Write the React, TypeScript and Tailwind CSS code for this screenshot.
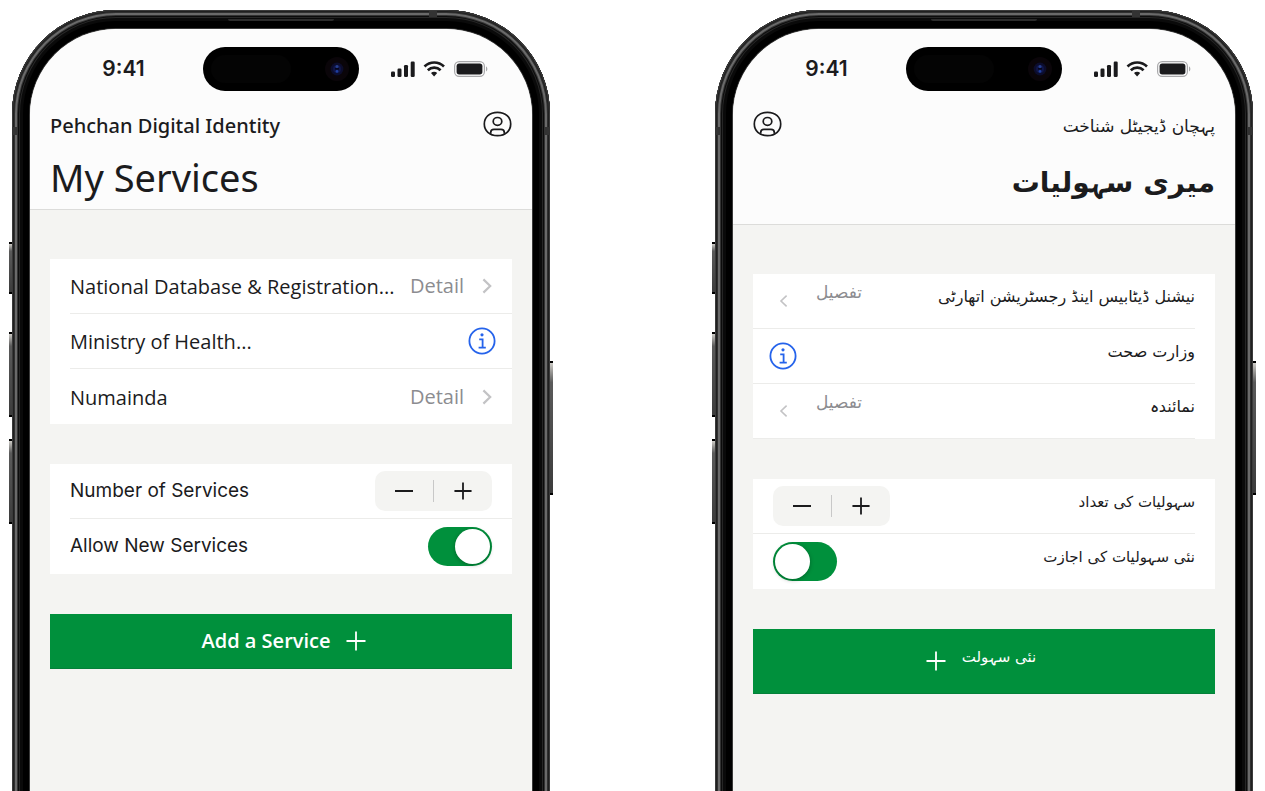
import type { ReactNode } from 'react'

type Locale = {
  id: string
  dir: 'ltr' | 'rtl'
  lang: string
  app: string
  title: string
  detail: string
  services: { name: string; info?: boolean }[]
  count: string
  allow: string
  add: string
}

const english: Locale = {
  id: 'en',
  dir: 'ltr',
  lang: 'en',
  app: 'Pehchan Digital Identity',
  title: 'My Services',
  detail: 'Detail',
  services: [
    { name: 'National Database & Registration...' },
    { name: 'Ministry of Health...', info: true },
    { name: 'Numainda' },
  ],
  count: 'Number of Services',
  allow: 'Allow New Services',
  add: 'Add a Service',
}

const urdu: Locale = {
  id: 'ur',
  dir: 'rtl',
  lang: 'ur',
  app: 'پہچان ڈیجیٹل شناخت',
  title: 'میری سہولیات',
  detail: 'تفصیل',
  services: [
    { name: 'نیشنل ڈیٹابیس اینڈ رجسٹریشن اتھارٹی' },
    { name: 'وزارت صحت', info: true },
    { name: 'نمائندہ' },
  ],
  count: 'سہولیات کی تعداد',
  allow: 'نئی سہولیات کی اجازت',
  add: 'نئی سہولت',
}

function SignalIcons() {
  return (
    <svg width="98" height="18" viewBox="0 0 98 18" aria-hidden="true">
      <g fill="#1b1b1d">
        <rect x="1" y="11.5" width="4" height="5.5" rx="1.2" />
        <rect x="7.5" y="8.5" width="4" height="8.5" rx="1.2" />
        <rect x="14" y="5" width="4" height="12" rx="1.2" />
        <rect x="20.7" y="1.5" width="4" height="15.5" rx="1.2" />
        <path d="M41 13 a4.2 4.2 0 0 1 6.2 0 L44.1 16.6 Z" />
      </g>
      <g fill="none" stroke="#1b1b1d" strokeWidth="2.7">
        <path d="M34.5 6.4 C40 1.2 48.5 1.2 54 6.4" />
        <path d="M37.8 10.2 C41.5 6.8 47 6.8 50.6 10.2" />
      </g>
      <rect x="64.6" y="1.6" width="29.8" height="14.8" rx="4.6" fill="none" stroke="#a9a9ab" strokeWidth="1.2" />
      <rect x="66.6" y="3.6" width="25.8" height="10.8" rx="2.6" fill="#1b1b1d" />
      <path d="M96 6.6 c1.8 .6 1.8 4.2 0 4.8 z" fill="#a9a9ab" />
    </svg>
  )
}

function ProfileIcon() {
  return (
    <svg width="29" height="26" viewBox="0 0 29 26" fill="none" stroke="#1b1b1d" strokeWidth="1.7" aria-hidden="true">
      <path d="M14.5 1.3 C22.6 1.3 27.7 6.3 27.7 13 S22.6 24.6 14.5 24.6 S1.3 19.7 1.3 13 S6.4 1.3 14.5 1.3 Z" />
      <ellipse cx="14.5" cy="10.4" rx="4.3" ry="3.9" />
      <path d="M7.7 22.8 V21.4 Q7.7 18.3 11 18.3 H18 Q21.3 18.3 21.3 21.4 V22.8" />
    </svg>
  )
}

function InfoIcon() {
  return (
    <svg width="28" height="28" viewBox="0 0 28 28" fill="none" stroke="#2563eb" strokeWidth="1.8" aria-hidden="true">
      <circle cx="14" cy="14" r="12.6" />
      <circle cx="14" cy="7.8" r="1.6" fill="#2563eb" stroke="none" />
      <path d="M11.2 12.4 H14.6 V20.6 M10.6 20.7 H17.8" />
    </svg>
  )
}

function Chevron({ rtl }: { rtl: boolean }) {
  return rtl ? (
    <svg width="9" height="14" viewBox="0 0 9 14" fill="none" stroke="#c3c3c5" strokeWidth="1.6" aria-hidden="true">
      <path d="M7.6 1.6 L2 7 L7.6 12.4" />
    </svg>
  ) : (
    <svg width="10" height="16" viewBox="0 0 10 16" fill="none" stroke="#c3c3c5" strokeWidth="2.2" aria-hidden="true">
      <path d="M1.4 1.4 L8.2 8 L1.4 14.6" />
    </svg>
  )
}

function Plus({ size, width }: { size: number; width: number }) {
  return (
    <svg width={size} height={size} viewBox="0 0 20 20" fill="none" stroke="currentColor" strokeWidth={width} aria-hidden="true">
      <path d="M10 .5 V19.5 M.5 10 H19.5" />
    </svg>
  )
}

function Island() {
  return (
    <div className="flex h-11 items-center justify-between rounded-full bg-black pr-2.5 pl-2">
      <div className="h-7 w-20 rounded-full bg-[#040404]" />
      <svg width="24" height="24" viewBox="0 0 24 24" aria-hidden="true">
        <circle cx="12" cy="12" r="12" fill="#0a0509" />
        <circle cx="12" cy="12" r="6.4" fill="#0c0d2c" />
        <circle cx="12" cy="12" r="4" fill="#10164a" />
        <circle cx="12" cy="9.4" r="1.5" fill="#27408f" />
        <circle cx="12" cy="14.4" r="1.4" fill="#1f3fa0" />
        <rect x="10" y="11" width="4" height="1.6" fill="#06071c" />
      </svg>
    </div>
  )
}

function SideButton({ className }: { className: string }) {
  return (
    <div
      className={`absolute w-1 border-y-2 border-black bg-linear-to-b from-[#cfcdc8] via-[#5a5a5a] via-15% to-[#3c3c3c] ${className}`}
    />
  )
}

function Frame({ children }: { children: ReactNode }) {
  return (
    <div className="relative -mb-8">
      <SideButton className="-left-[3px] top-[232px] h-[52px]" />
      <SideButton className="-left-[3px] top-[322px] h-[85px]" />
      <SideButton className="-left-[3px] top-[429px] h-[85px]" />
      <SideButton className="-right-[3px] top-[351px] h-[134px]" />
      <div className="relative h-full rounded-t-[104px] bg-black p-[18px] pt-[19px] shadow-[inset_0_0_0_1px_#3a3a3a,inset_0_0_0_2px_#202020,inset_0_0_0_3px_#303030,inset_0_0_0_5px_#6a6a6a,inset_0_0_0_6px_#333333,inset_0_0_0_7px_#0c0c0c,inset_0_0_0_8px_#262626,inset_0_0_0_11px_#0a0a0a]">
        <div className="absolute top-[117px] left-0 h-2 w-[6px] bg-[#333333]" />
        <div className="absolute top-[117px] right-0 h-2 w-[6px] bg-[#333333]" />
        <div className="absolute top-px right-[113px] h-[6px] w-2 bg-[#333333]" />
        <div className="absolute inset-x-0 top-[9px] mx-auto h-[2px] w-[106px] rounded-b-sm bg-[#2c2c2c]" />
        <div className="h-full overflow-hidden rounded-t-[86px] bg-[#f4f4f2] shadow-[0_0_0_1px_#3a3a3a]">{children}</div>
      </div>
    </div>
  )
}

function Phone({ t }: { t: Locale }) {
  const rtl = t.dir === 'rtl'
  const rowText = rtl ? "mb-2 font-['DejaVu_Sans'] text-base" : "mt-0.5 font-['Open_Sans'] text-xl"
  const settingText = rtl ? "mb-2 font-['DejaVu_Sans'] text-[15px]" : "font-['Inter'] text-[19px]"

  return (
    <Frame>
      <header className="border-b border-[#dcdcda] bg-[#fcfcfc]">
        <div className="grid grid-cols-[1fr_156px_1fr] items-center pt-[18px]">
          <span className="pl-3.5 text-center font-['Inter'] text-[21px] leading-7 font-semibold">9:41</span>
          <Island />
          <span className="flex justify-center pr-3.5">
            <SignalIcons />
          </span>
        </div>
        <div dir={t.dir} lang={t.lang} className={`px-5 ${rtl ? "h-[133px] font-['DejaVu_Sans']" : "h-[118px] font-['Noto_Sans']"}`}>
          <div className="flex items-start justify-between pt-5">
            <p className={rtl ? 'text-[17px] leading-[30px]' : 'text-xl leading-[30px] font-medium'}>{t.app}</p>
            <button type="button" aria-label="Profile">
              <ProfileIcon />
            </button>
          </div>
          <h1 className={rtl ? 'pt-4 text-[28px] leading-[52px] font-bold' : 'pt-2.5 text-[38px] leading-[52px]'}>{t.title}</h1>
        </div>
      </header>

      <main dir={t.dir} lang={t.lang} className="flex flex-col gap-10 px-5 pt-[49px]">
        <ul className="bg-white">
          {t.services.map((s, i) => (
            <li key={s.name} className="ps-5">
              <div
                className={`flex h-[55px] items-center justify-between border-[#ececea] ${rtl || i < 2 ? 'border-b' : ''} ${s.info ? 'pe-4' : rtl ? 'pe-[26px]' : 'pe-5'}`}
              >
                <span className={rowText}>{s.name}</span>
                {s.info ? (
                  <button type="button" aria-label={s.name}>
                    <InfoIcon />
                  </button>
                ) : (
                  <a
                    href="#detail"
                    className={`flex items-center text-[#8c8c90] ${rtl ? "gap-[28px] font-['DejaVu_Sans'] text-[17px]" : "gap-[18px] font-['Open_Sans'] text-xl"}`}
                  >
                    <span className={rtl ? 'mb-4' : ''}>{t.detail}</span>
                    <Chevron rtl={rtl} />
                  </a>
                )}
              </div>
            </li>
          ))}
        </ul>

        <div className="bg-white ps-5">
          <div className="flex h-[55px] items-center justify-between border-b border-[#ececea] pe-5">
            <span className={settingText}>{t.count}</span>
            <div dir="ltr" className="flex h-10 w-[117px] items-center rounded-[10px] bg-[#f4f4f2]">
              <button type="button" aria-label="Decrease" className="flex flex-1 justify-center">
                <span className="h-[2px] w-[18px] bg-[#1b1b1d]" />
              </button>
              <span className="h-[22px] w-px bg-[#c8c8c8]" />
              <button type="button" aria-label="Increase" className="flex flex-1 justify-center text-[#1b1b1d]">
                <Plus size={18} width={2} />
              </button>
            </div>
          </div>
          <div className="flex h-[55px] items-center justify-between pe-5">
            <label htmlFor={`allow-${t.id}`} className={settingText}>
              {t.allow}
            </label>
            <input
              id={`allow-${t.id}`}
              type="checkbox"
              defaultChecked
              className="h-[39px] w-16 appearance-none rounded-full bg-[#9a9a9a] p-[2px] before:block before:size-[35px] before:rounded-full before:bg-white before:shadow-[0_1px_4px_rgba(0,0,0,0.3)] checked:bg-[#00903c] checked:before:ms-[25px]"
            />
          </div>
        </div>

        <button
          type="button"
          className={`flex items-center justify-center gap-4 border-b border-[#04803a] bg-[#00903c] ps-1.5 text-white ${rtl ? "h-[65px] font-['DejaVu_Sans'] text-[15px]" : "h-[55px] font-['Open_Sans'] text-xl font-semibold"}`}
        >
          <span className={rtl ? 'mb-2' : ''}>{t.add}</span>
          <Plus size={20} width={1.8} />
        </button>
      </main>
    </Frame>
  )
}

export default function App() {
  return (
    <div className="grid h-screen grid-cols-2 gap-[165px] overflow-hidden bg-white px-3 pt-2.5 text-[#1b1b1d]">
      <Phone t={english} />
      <Phone t={urdu} />
    </div>
  )
}
